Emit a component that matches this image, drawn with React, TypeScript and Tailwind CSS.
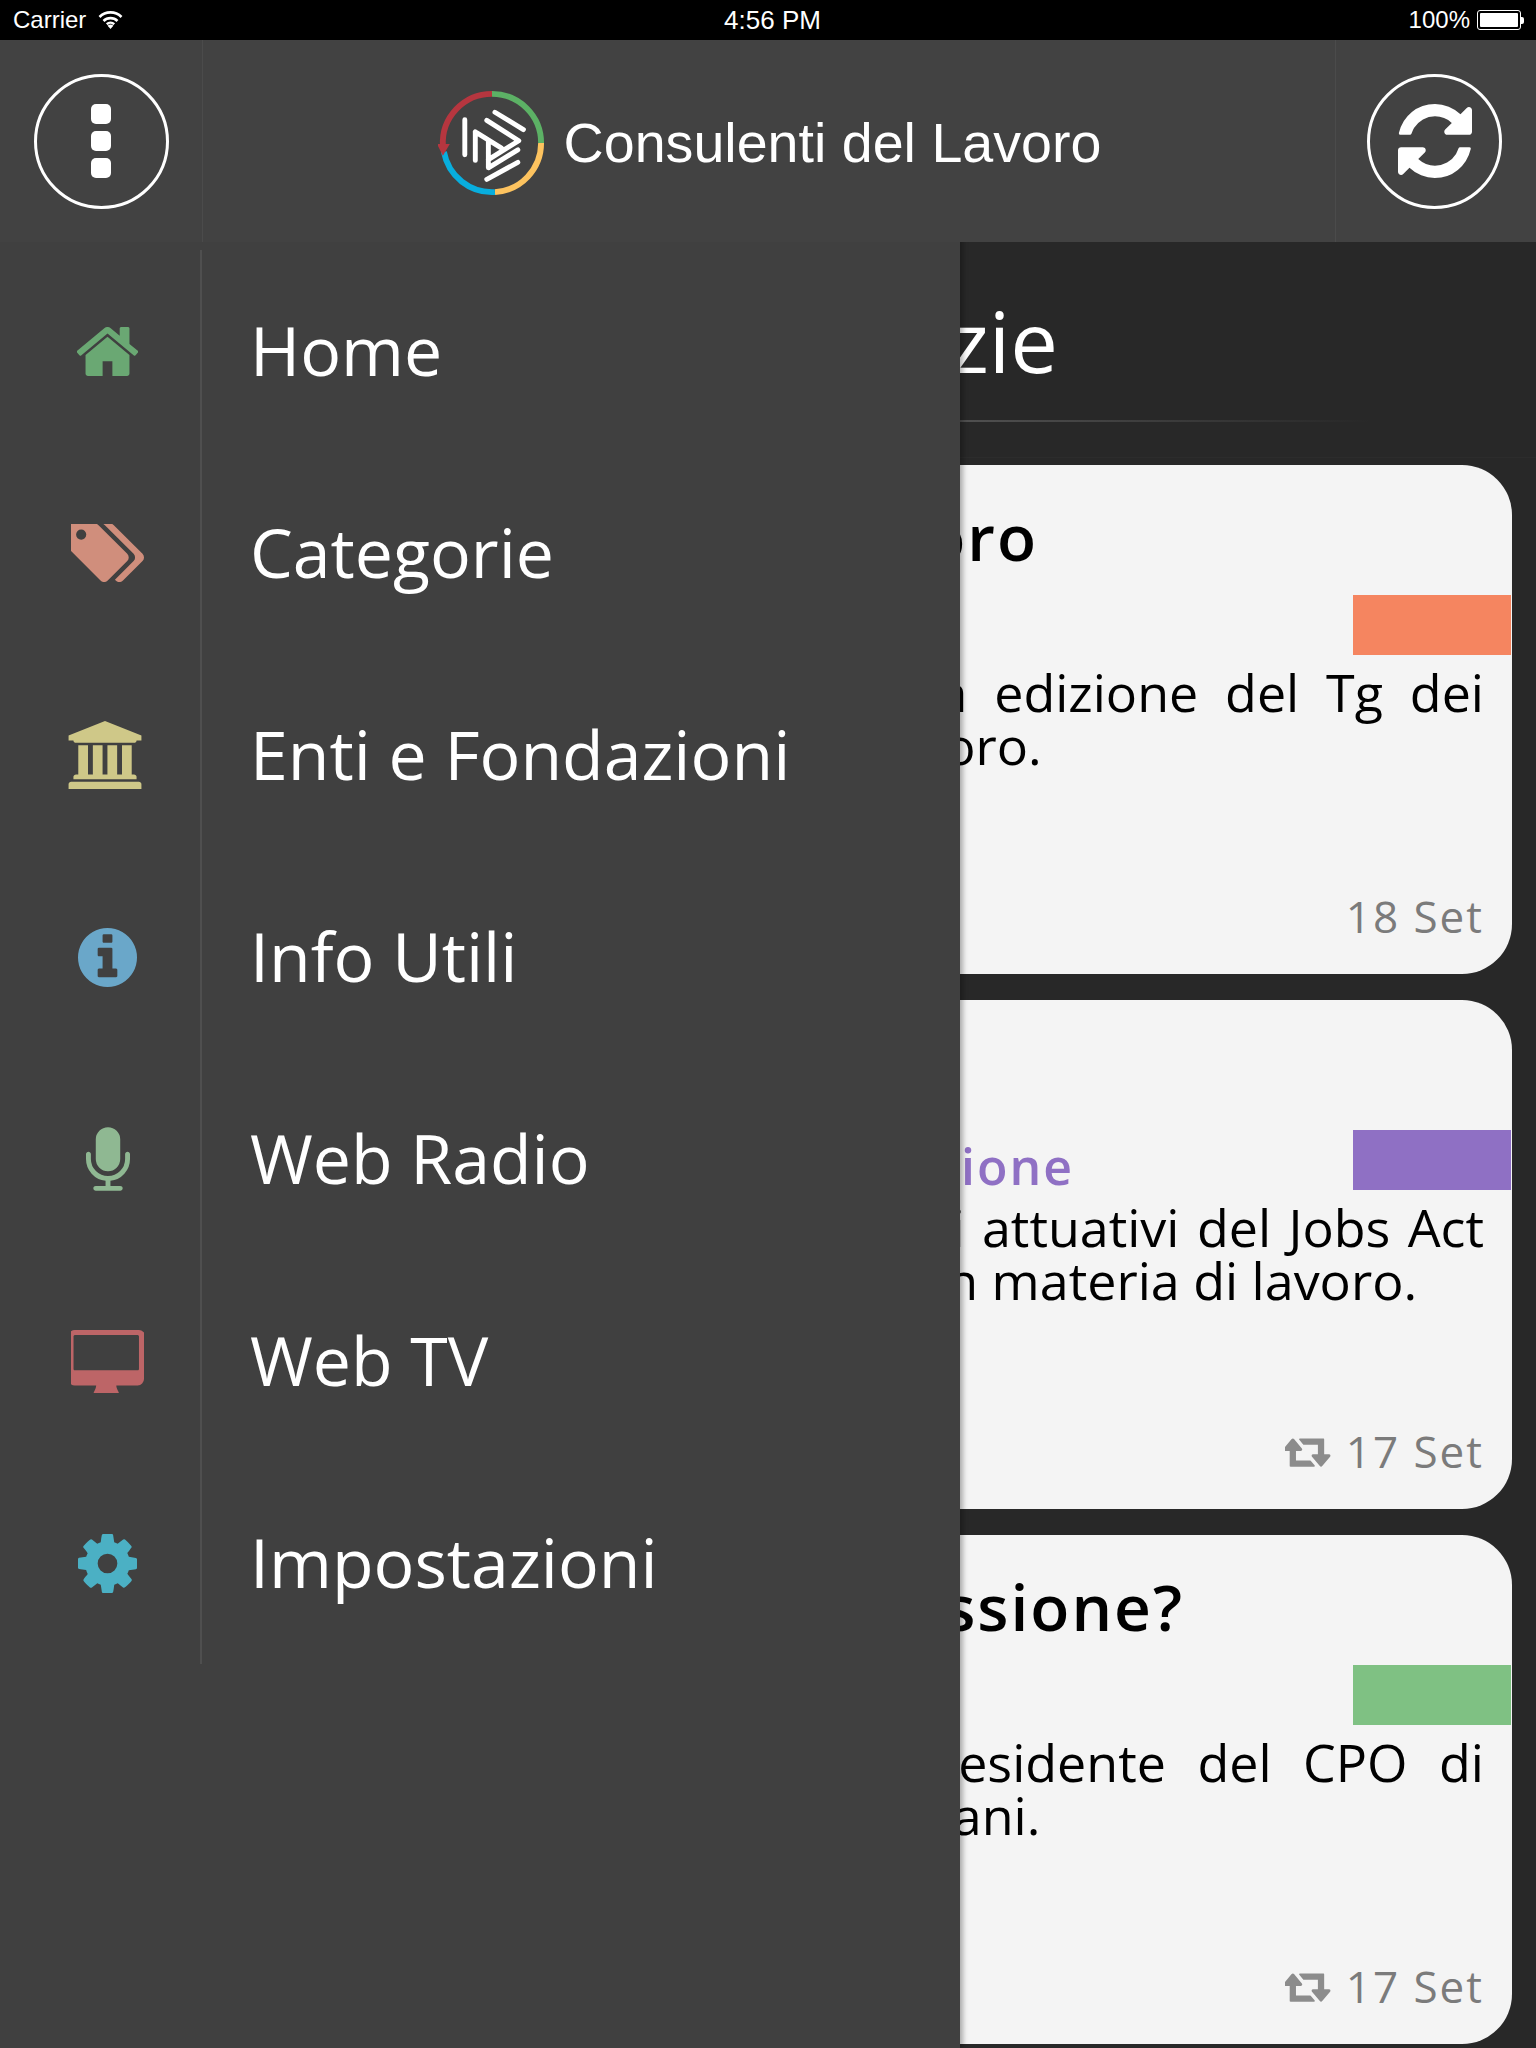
import React from "react";

const OS = "font-['Open_Sans',sans-serif]";

function Fa({ d, box, className }: { d: string; box: string; className: string }) {
  return (
    <svg viewBox={box} className={className} fill="currentColor" fillRule="evenodd">
      <path d={d} />
    </svg>
  );
}

const P = {
  home: "M1472 992v480q0 26-19 45t-45 19h-384v-384h-256v384h-384q-26 0-45-19t-19-45v-480q0-1 .5-3t.5-3l575-474 575 474q1 2 1 6zm223-69l-62 74q-8 9-21 11h-3q-13 0-21-7l-692-577-692 577q-12 8-24 7-13-2-21-11l-62-74q-8-10-7-23.5t11-21.5l719-599q32-26 76-26t76 26l244 204v-195q0-14 9-23t23-9h192q14 0 23 9t9 23v408l219 182q10 8 11 21.5t-7 23.5z",
  tags: "M384 448q0-53-37.5-90.5t-90.5-37.5-90.5 37.5-37.5 90.5 37.5 90.5 90.5 37.5 90.5-37.5 37.5-90.5zm1067 576q0 53-37 90l-491 492q-39 37-91 37-53 0-90-37l-715-716q-38-37-64.5-101t-26.5-117v-416q0-52 38-90t90-38h416q53 0 117 26.5t102 64.5l715 714q37 39 37 91zm384 0q0 53-37 90l-491 492q-39 37-91 37-36 0-59-14t-53-45l470-470q37-37 37-90 0-52-37-91l-715-714q-38-38-102-64.5t-117-26.5h224q53 0 117 26.5t102 64.5l715 714q37 39 37 91z",
  bank: "M960 0l960 384v128h-128q0 26-20.5 45t-48.5 19h-1526q-28 0-48.5-19t-20.5-45h-128v-128zm-704 640h256v768h128v-768h256v768h128v-768h256v768h128v-768h256v768h59q28 0 48.5 19t20.5 45v64h-1664v-64q0-26 20.5-45t48.5-19h59v-768zm1595 960q28 0 48.5 19t20.5 45v128h-1920v-128q0-26 20.5-45t48.5-19h1782z",
  info: "M1152 1376v-160q0-14-9-23t-23-9h-96v-512q0-14-9-23t-23-9h-320q-14 0-23 9t-9 23v160q0 14 9 23t23 9h96v320h-96q-14 0-23 9t-9 23v160q0 14 9 23t23 9h448q14 0 23-9t9-23zm-128-896v-160q0-14-9-23t-23-9h-192q-14 0-23 9t-9 23v160q0 14 9 23t23 9h192q14 0 23-9t9-23zm640 416q0 209-103 385.5t-279.5 279.5-385.5 103-385.5-103-279.5-279.5-103-385.5 103-385.5 279.5-279.5 385.5-103 385.5 103 279.5 279.5 103 385.5z",
  mic: "M1472 704v128q0 221-147.5 384.5t-364.5 187.5v132h256q26 0 45 19t19 45-19 45-45 19h-640q-26 0-45-19t-19-45 19-45 45-19h256v-132q-217-24-364.5-187.5t-147.5-384.5v-128q0-26 19-45t45-19 45 19 19 45v128q0 185 131.5 316.5t316.5 131.5 316.5-131.5 131.5-316.5v-128q0-26 19-45t45-19 45 19 19 45zm-256-384v512q0 132-94 226t-226 94-226-94-94-226v-512q0-132 94-226t226-94 226 94 94 226z",
  desktop: "M1728 992v-832q0-13-9.5-22.5t-22.5-9.5h-1600q-13 0-22.5 9.5t-9.5 22.5v832q0 13 9.5 22.5t22.5 9.5h1600q13 0 22.5-9.5t9.5-22.5zm128-832v1088q0 66-47 113t-113 47h-544q0 37 16 77.5t32 71 16 43.5q0 26-19 45t-45 19h-512q-26 0-45-19t-19-45q0-14 16-44t32-70 16-78h-544q-66 0-113-47t-47-113v-1088q0-66 47-113t113-47h1632q66 0 113 47t47 113z",
  cog: "M1152 896q0-106-75-181t-181-75-181 75-75 181 75 181 181 75 181-75 75-181zm512-109v222q0 12-8 23t-20 13l-185 28q-19 54-39 91 35 50 107 138 10 12 10 25t-9 23q-27 37-99 108t-94 71q-12 0-26-9l-138-108q-44 23-91 38-16 136-29 186-7 28-36 28h-222q-14 0-24.5-8.5t-11.5-21.5l-28-184q-49-16-90-37l-141 107q-10 9-25 9-14 0-25-11-126-114-165-168-7-10-7-23 0-12 8-23 15-21 51-66.5t54-70.5q-27-50-41-99l-183-27q-13-2-21-12.5t-8-23.5v-222q0-12 8-23t19-13l186-28q14-46 39-92-40-57-107-138-10-12-10-24 0-10 9-23 26-36 98.5-107.5t94.5-71.5q13 0 26 10l138 107q44-23 91-38 16-136 29-186 7-28 36-28h222q14 0 24.5 8.5t11.5 21.5l28 184q49 16 90 37l142-107q9-9 24-9 13 0 25 10 129 119 165 170 7 8 7 22 0 12-8 23-15 21-51 66.5t-54 70.5q26 50 41 98l183 28q13 2 21 12.5t8 23.5z",
  retweet: "M1216 1504q0 13-9.5 22.5t-22.5 9.5h-960q-8 0-13.5-2t-9-7-5.5-8-3-11.5-1-11.5v-600h-192q-26 0-45-19t-19-45q0-24 15-41l320-384q19-22 49-22t49 22l320 384q15 17 15 41 0 26-19 45t-45 19h-192v384h576q16 0 25 11l160 192q7 10 7 21zm640-416q0 24-15 41l-320 384q-20 23-49 23t-49-23l-320-384q-15-17-15-41 0-26 19-45t45-19h192v-384h-576q-16 0-25-12l-160-192q-7-9-7-20 0-13 9.5-22.5t22.5-9.5h960q8 0 13.5 2t9 7 5.5 8 3 11.5 1 11.5v600h192q26 0 45 19t19 45z",
  refresh: "M1639 1056q0 5-1 7-64 268-268 434.5t-478 166.5q-146 0-282.5-55t-243.5-157l-129 129q-19 19-45 19t-45-19-19-45v-448q0-26 19-45t45-19h448q26 0 45 19t19 45-19 45l-137 137q71 66 161 102t187 36q134 0 250-65t186-179q11-17 53-117 8-23 30-23h192q13 0 22.5 9.5t9.5 22.5zm25-800v448q0 26-19 45t-45 19h-448q-26 0-45-19t-19-45 19-45l138-138q-148-137-349-137-134 0-250 65t-186 179q-11 17-53 117-8 23-30 23h-199q-13 0-22.5-9.5t-9.5-22.5v-7q65-268 270-434.5t480-166.5q146 0 284 55.5t245 156.5l130-129q19-19 45-19t45 19 19 45z",
};

function Logo() {
  const lines =
    "M27.3 31.3 V67 M38 43.7 V72.7 M38 43.7 L64.7 60.3 M58 23.7 L87 41.3 M49.7 32 L82.3 52.7 L51.3 72 M51.3 53.7 V80.3 L81.3 62 M49.7 92 L81.3 74.7";
  return (
    <svg viewBox="0 0 110 110" className="w-[108px] h-[108px] shrink-0">
      <g fill="none" strokeWidth="6">
        <path d="M55 5 A50 50 0 0 1 105 55" stroke="#5cb165" />
        <path d="M105 55 A50 50 0 0 1 58 105" stroke="#fdc35f" />
        <path d="M58 105 A50 50 0 0 1 6 64" stroke="#08aede" />
        <path d="M55 5 A50 50 0 0 0 5 58" stroke="#b6363f" />
      </g>
      <path d="M-1 56 H12 L5 68 Z" fill="#b6363f" />
      <path d={lines} fill="none" stroke="#fff" strokeWidth="5" strokeLinecap="round" strokeLinejoin="round" />
    </svg>
  );
}

function Wifi() {
  return (
    <svg viewBox="0 0 25 18" className="w-[25px] h-[18px] ml-[12px]" fill="none" stroke="#fff" strokeWidth="2.6">
      <path d="M1.5 6 A15.5 15.5 0 0 1 23.5 6" />
      <path d="M5.5 10 A10 10 0 0 1 19.5 10" />
      <path d="M8.8 13.2 A5.4 5.4 0 0 1 16.2 13.2" />
      <path d="M12.5 18 L9.6 14.8 A4 4 0 0 1 15.4 14.8 Z" fill="#fff" stroke="none" />
    </svg>
  );
}

const menu = [
  { label: "Home", d: P.home, box: "96 256 1600 1280", cls: "w-[61px] h-[49px] text-[#6aa873]" },
  { label: "Categorie", d: P.tags, box: "0 192 1835 1440", cls: "w-[73px] h-[58px] text-[#d08e7c]" },
  { label: "Enti e Fondazioni", d: P.bank, box: "0 0 1920 1792", cls: "w-[74px] h-[68px] mr-[6px] text-[#cfc888]" },
  { label: "Info Utili", d: P.info, box: "128 128 1536 1536", cls: "w-[59px] h-[59px] text-[#6aa7c9]" },
  { label: "Web Radio", d: P.mic, box: "320 0 1152 1664", cls: "w-[44px] h-[64px] text-[#8fb892]" },
  { label: "Web TV", d: P.desktop, box: "0 0 1856 1600", cls: "w-[73px] h-[63px] text-[#bd6567]" },
  { label: "Impostazioni", d: P.cog, box: "128 128 1536 1536", cls: "w-[59px] h-[59px] text-[#4bb0c4]" },
];

function Card({
  title,
  titleMr,
  category,
  catMr,
  color,
  text,
  date,
  retweet,
  pad,
}: {
  title: string;
  titleMr: string;
  category?: string;
  catMr?: string;
  color: string;
  text: string;
  date: string;
  retweet?: boolean;
  pad: string;
}) {
  return (
    <div className={`relative h-[509px] w-[1488px] rounded-[50px] bg-[#f4f4f4] pr-[28px] flex flex-col ${pad}`}>
      <div className={`h-[138px] pt-[6px] flex items-center justify-end text-[64px] font-semibold tracking-[2px] text-black ${titleMr}`}>
        {title}
      </div>
      <div className={`h-[62px] pt-[12px] flex items-start justify-end text-[50px] leading-[32px] font-semibold tracking-[2px] text-[#8f70c4] ${catMr ?? ""}`}>
        {category}
      </div>
      <p className="text-[52px] leading-[53px] text-black text-justify">{text}</p>
      <div className="mt-auto mb-[30px] h-[56px] flex items-center justify-end gap-[14px] text-[44px] tracking-[2px] text-[#7b7b7b]">
        {retweet && <Fa d={P.retweet} box="0 256 1920 1280" className="w-[47px] h-[32px] text-[#8c8c8c]" />}
        <span>{date}</span>
      </div>
      <div className={`absolute right-px top-[130px] w-[158px] h-[60px] ${color}`} />
    </div>
  );
}

export default function App() {
  return (
    <div className={`relative w-[1536px] h-[2048px] overflow-hidden bg-[#282828] ${OS}`}>
      {/* status bar */}
      <div className="h-[40px] bg-black text-white font-['Liberation_Sans',sans-serif] text-[24px] flex items-center justify-between pl-[13px] pr-[12px]">
        <div className="flex items-center w-[400px]">
          <span>Carrier</span>
          <Wifi />
        </div>
        <span className="text-[26px] ml-[8px]">4:56 PM</span>
        <div className="flex items-center justify-end w-[400px]">
          <span>100%</span>
          <div className="ml-[7px] w-[44px] h-[20px] rounded-[3px] border-[1.5px] border-white p-[2px]">
            <div className="w-full h-full bg-white rounded-[1px]" />
          </div>
          <div className="w-[3px] h-[7px] bg-white rounded-r-[2px]" />
        </div>
      </div>

      {/* header */}
      <div className="h-[202px] bg-[#424242] flex relative z-20">
        <div className="w-[203px] flex items-center justify-center border-r border-[#4b4b4b]">
          <div className="w-[135px] h-[135px] rounded-full border-[3px] border-white flex flex-col items-center justify-center gap-[7px]">
            <span className="w-[20px] h-[20px] rounded-[5px] bg-white" />
            <span className="w-[20px] h-[20px] rounded-[5px] bg-white" />
            <span className="w-[20px] h-[20px] rounded-[5px] bg-white" />
          </div>
        </div>
        <div className="flex-1 flex items-center justify-center gap-[18px] pl-[1px] pt-[4px]">
          <Logo />
          <span className="mt-[2px] font-['Liberation_Sans',sans-serif] text-[55.6px] text-white">Consulenti del Lavoro</span>
        </div>
        <div className="w-[201px] flex items-center justify-center border-l border-[#4b4b4b] pr-[3px]">
          <div className="w-[135px] h-[135px] rounded-full border-[3px] border-white flex items-center justify-center">
            <Fa d={P.refresh} box="128 128 1536 1536" className="w-[74px] h-[74px] text-white" />
          </div>
        </div>
      </div>

      {/* page behind the drawer */}
      <div className="h-[215px] relative">
        <div className="pl-[782px] pt-[41px] text-[85px] leading-[114px] text-white">Notizie</div>
        <div className="absolute left-0 top-[178px] w-[1370px] h-[2px] bg-linear-to-r from-[#505050] from-[70%] to-transparent" />
      </div>
      <div className="pl-[24px] pt-[7px] flex flex-col gap-[26px] border-t border-[#2c2c2c]">
        <Card
          title="Tg Lavoro"
          titleMr="mr-[446px]"
          color="bg-[#f58560]"
          text="Online la nuova edizione del Tg dei Consulta del lavoro."
          date="18 Set"
          pad="pl-[538px]"
        />
        <Card
          title="Riforma"
          titleMr="mr-[620px]"
          category="Legislazione"
          catMr="mr-[410px]"
          color="bg-[#8f70c4]"
          text="Approvati i decreti attuativi del Jobs Act Nuove previsioni in materia di lavoro."
          date="17 Set"
          retweet
          pad="pl-[489px]"
        />
        <Card
          title="Quale professione?"
          titleMr="mr-[300px]"
          color="bg-[#7fc183]"
          text="Cosa pensa il presidente del CPO di Bologna per i giovani."
          date="17 Set"
          retweet
          pad="pl-[496px]"
        />
      </div>

      {/* drawer */}
      <div className="absolute left-0 top-[40px] bottom-0 w-[960px] z-10 bg-[#404040] shadow-[3px_0_5px_rgba(0,0,0,0.3)] pt-[210px]">
        {menu.map((m) => (
          <div key={m.label} className="h-[202px] flex">
            <div className="w-[200px] flex items-center justify-center pl-[15px]">
              <Fa d={m.d} box={m.box} className={m.cls} />
            </div>
            <div className="flex-1 border-l-2 border-[#4f4f4f] pl-[48px] pb-[3px] flex items-center text-[68px] text-white">
              {m.label}
            </div>
          </div>
        ))}
      </div>
    </div>
  );
}
